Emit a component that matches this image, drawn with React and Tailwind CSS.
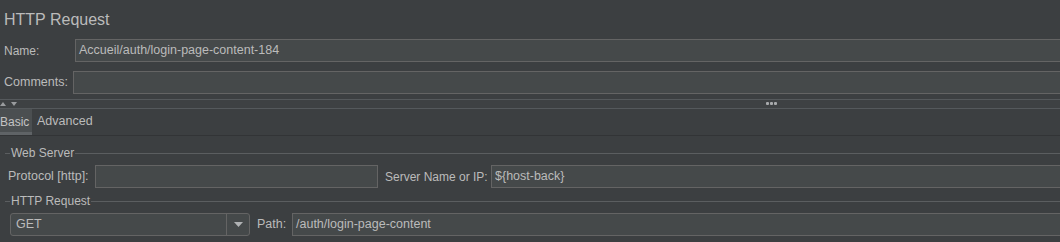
import React from 'react';

function Field({ value, className = '' }) {
    return (
        <div className={`h-[23px] bg-[#45494a] border border-[#646464] flex items-center pl-[3px] text-[12.5px] text-[#bbbbbb] whitespace-nowrap overflow-hidden ${className}`}>
            {value}
        </div>
    );
}

function TitledLine({ title }) {
    return (
        <div className="flex items-center h-[16px] pl-[5px]">
            <div className="w-[5px] h-px bg-[#5b5e60]" />
            <span className="px-[1px] leading-[16px]">{title}</span>
            <div className="flex-1 h-px bg-[#5b5e60]" />
        </div>
    );
}

export default function App() {
    return (
        <div
            className="w-[1060px] h-[242px] bg-[#3c3f41] text-[#bbbbbb] text-[12px] overflow-hidden"
            style={{ fontFamily: '"Liberation Sans", Arial, sans-serif' }}
        >
            {/* Title */}
            <div className="h-[39px] pt-[11px] pl-[4px] text-[16px] leading-[18px]">HTTP Request</div>

            {/* Name / Comments */}
            <div className="flex items-center h-[23px]">
                <div className="w-[75px] pl-[4px]">Name:</div>
                <Field value="Accueil/auth/login-page-content-184" className="flex-1 -mr-[2px]" />
            </div>
            <div className="flex items-center h-[23px] mt-[9px]">
                <div className="w-[73px] pl-[4px] text-[12.5px]">Comments:</div>
                <Field value="" className="flex-1 -mr-[2px]" />
            </div>

            {/* Splitter */}
            <div className="mt-[5px] h-[10px] border-t border-b border-[#55595c] bg-[#3e4143] flex items-center justify-between relative">
                <svg width="20" height="6" viewBox="0 0 20 6">
                    <polygon points="0,5 3,1 6,5" fill="#9a9c9e" />
                    <polygon points="11,1 17,1 14,5" fill="#9a9c9e" />
                </svg>
                <div className="absolute left-[766px] top-[2px] flex gap-[1px]">
                    <div className="w-[3px] h-[3px] bg-[#a8aaac] rounded-[1px]" />
                    <div className="w-[3px] h-[3px] bg-[#a8aaac] rounded-[1px]" />
                    <div className="w-[3px] h-[3px] bg-[#a8aaac] rounded-[1px]" />
                </div>
            </div>

            {/* Tabs */}
            <div className="h-[27px] flex items-stretch border-b border-[#323436] text-[12.5px]">
                <div className="w-[32px] bg-[#4b4f51] border-b-[3px] border-[#5f6366] flex items-center pt-[2px] text-[#c4c4c4] text-[12px]">Basic</div>
                <div className="pl-[5px] flex items-center pt-[2px] pb-[3px]">Advanced</div>
            </div>

            {/* Web Server */}
            <div className="mt-[9px]">
                <TitledLine title="Web Server" />
            </div>
            <div className="flex items-center h-[23px] mt-[4px]">
                <div className="w-[95px] pl-[8px] whitespace-nowrap text-[12.5px]">Protocol [http]:</div>
                <Field value="" className="w-[283px]" />
                <div className="w-[113px] pl-[7px] whitespace-nowrap">Server Name or IP:</div>
                <Field value="${host-back}" className="flex-1 -mr-[2px]" />
            </div>

            {/* HTTP Request */}
            <div className="mt-[5px]">
                <TitledLine title="HTTP Request" />
            </div>
            <div className="flex items-center h-[23px] mt-[4px]">
                <div className="ml-[10px] w-[240px] h-[23px] bg-[#45494a] border border-[#646464] rounded-[3px] flex text-[12.5px]">
                    <div className="flex-1 flex items-center pl-[5px]">GET</div>
                    <div className="w-[23px] border-l border-[#646464] flex items-center justify-center">
                        <svg width="9" height="5" viewBox="0 0 9 5">
                            <polygon points="0,0 9,0 4.5,5" fill="#b0b2b4" />
                        </svg>
                    </div>
                </div>
                <div className="w-[42px] pl-[7px] text-[12.5px]">Path:</div>
                <Field value="/auth/login-page-content" className="flex-1 -mr-[2px]" />
            </div>
        </div>
    );
}
